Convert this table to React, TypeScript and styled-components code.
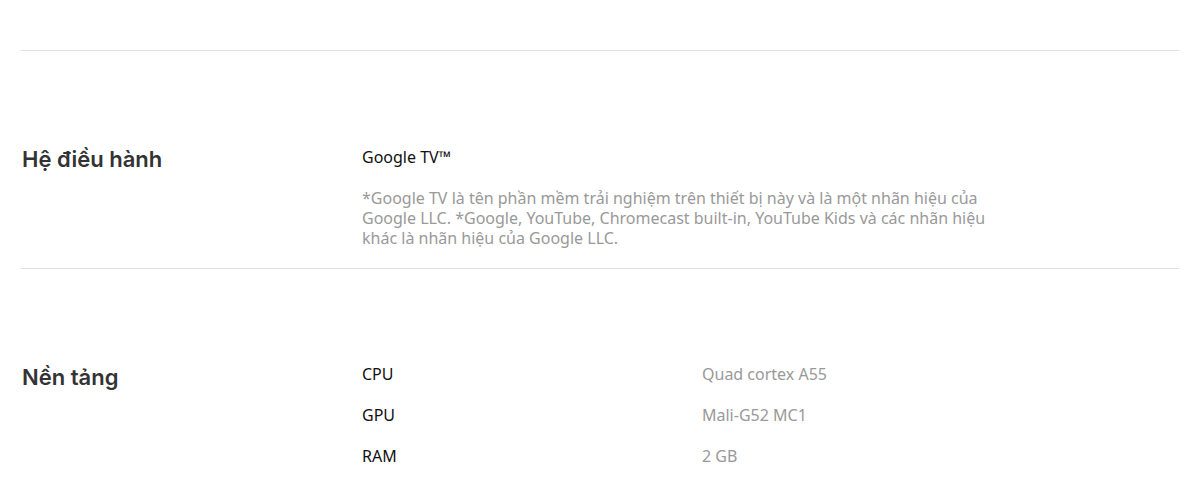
import React from "react";
import styled, { createGlobalStyle } from "styled-components";

const Global = createGlobalStyle`
  html, body { margin: 0; padding: 0; background: #fff; }
  body { font-family: "Noto Sans", Roboto, sans-serif; -webkit-font-smoothing: antialiased; }
`;

const Page = styled.div`
  padding: 50px 21px 0;
`;

const Section = styled.section`
  display: grid;
  grid-template-columns: 340px 1fr;
  border-top: 1px solid #e0e0e0;
  padding: 93px 0 20px 1px;
`;

const Title = styled.h2`
  margin: 0;
  font-family: Inter, "Noto Sans", sans-serif;
  font-size: 22px;
  font-weight: 600;
  line-height: 30px;
  color: #333;
`;

const Body = styled.div`
  display: flex;
  flex-direction: column;
`;

const Main = styled.div`
  font-size: 16px;
  line-height: 24px;
  color: #111;
  padding-top: 1px;
`;

const Note = styled.p`
  margin: 19px 0 0;
  max-width: 650px;
  font-size: 16px;
  line-height: 20px;
  color: #999;
`;

const Rows = styled.div`
  display: flex;
  flex-direction: column;
  gap: 17px;
`;

const Row = styled.div`
  display: grid;
  grid-template-columns: 340px 1fr;
  font-size: 16px;
  line-height: 24px;
`;

const Key = styled.span`
  color: #111;
`;

const Val = styled.span`
  color: #999;
`;

const specs = [
  ["CPU", "Quad cortex A55"],
  ["GPU", "Mali-G52 MC1"],
  ["RAM", "2 GB"],
];

export default function App() {
  return (
    <>
      <Global />
      <Page>
        <Section>
          <Title>Hệ điều hành</Title>
          <Body>
            <Main>Google TV™</Main>
            <Note>
              *Google TV là tên phần mềm trải nghiệm trên thiết bị này và là một nhãn hiệu của
              Google LLC. *Google, YouTube, Chromecast built-in, YouTube Kids và các nhãn hiệu
              khác là nhãn hiệu của Google LLC.
            </Note>
          </Body>
        </Section>
        <Section>
          <Title>Nền tảng</Title>
          <Rows>
            {specs.map(([k, v]) => (
              <Row key={k}>
                <Key>{k}</Key>
                <Val>{v}</Val>
              </Row>
            ))}
          </Rows>
        </Section>
      </Page>
    </>
  );
}
